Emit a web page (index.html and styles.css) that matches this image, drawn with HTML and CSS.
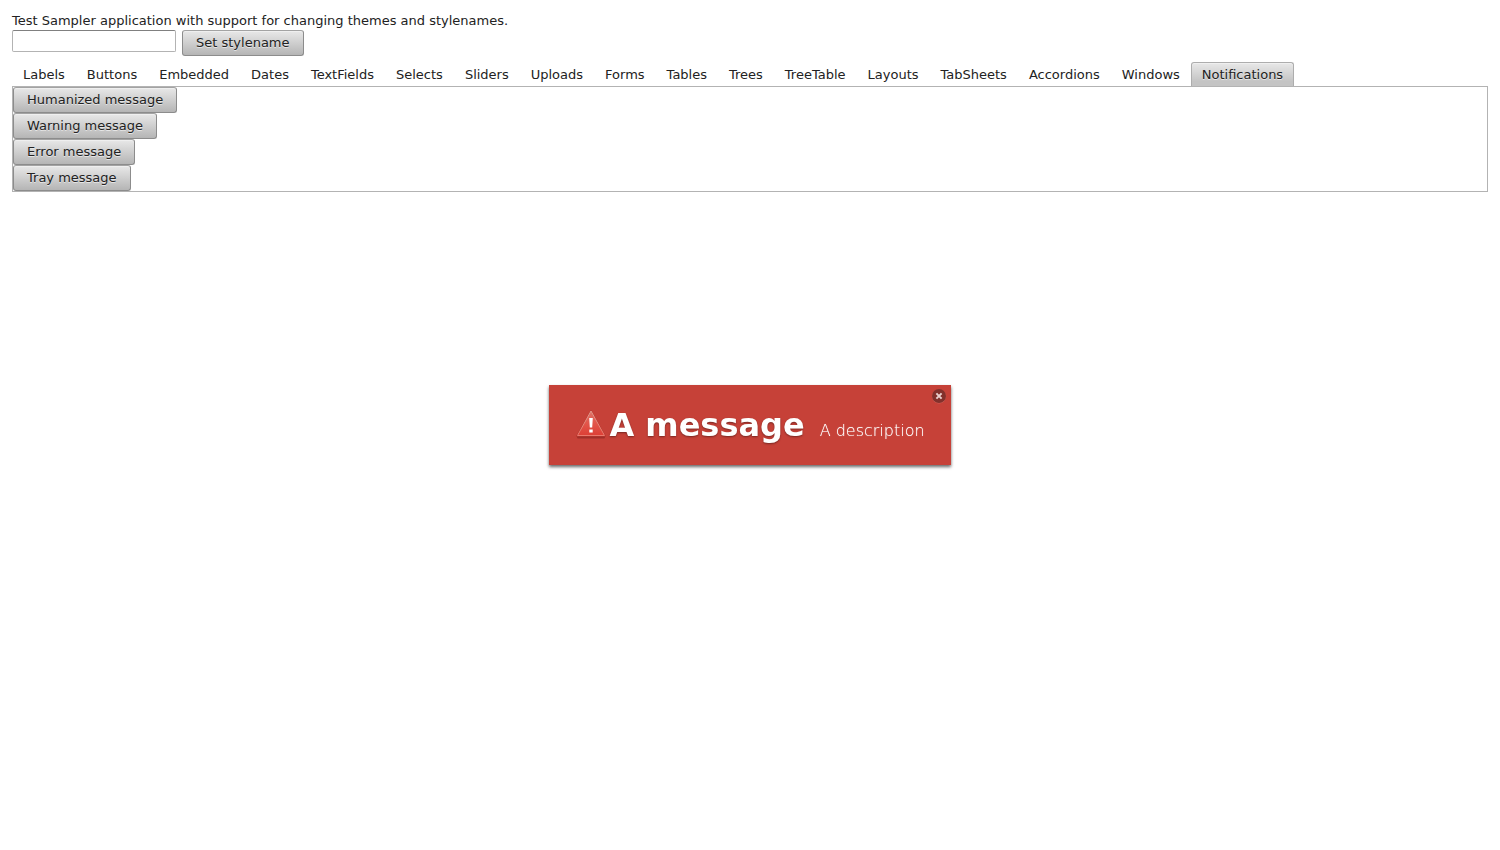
FILE: index.html
```html
<!DOCTYPE html>
<html lang="en">
<head>
<meta charset="utf-8">
<title>Test Sampler</title>
<link rel="stylesheet" href="styles.css">
</head>
<body>
<main class="app">
  <label class="intro" for="stylename">Test Sampler application with support for changing themes and stylenames.</label>
  <div class="toolbar">
    <input class="textfield" id="stylename" type="text">
    <button class="button" type="button">Set stylename</button>
  </div>
  <div class="tabs" role="tablist">
    <button class="tab" type="button" role="tab">Labels</button>
    <button class="tab" type="button" role="tab">Buttons</button>
    <button class="tab" type="button" role="tab">Embedded</button>
    <button class="tab" type="button" role="tab">Dates</button>
    <button class="tab" type="button" role="tab">TextFields</button>
    <button class="tab" type="button" role="tab">Selects</button>
    <button class="tab" type="button" role="tab">Sliders</button>
    <button class="tab" type="button" role="tab">Uploads</button>
    <button class="tab" type="button" role="tab">Forms</button>
    <button class="tab" type="button" role="tab">Tables</button>
    <button class="tab" type="button" role="tab">Trees</button>
    <button class="tab" type="button" role="tab">TreeTable</button>
    <button class="tab" type="button" role="tab">Layouts</button>
    <button class="tab" type="button" role="tab">TabSheets</button>
    <button class="tab" type="button" role="tab">Accordions</button>
    <button class="tab" type="button" role="tab">Windows</button>
    <button class="tab tab-selected" type="button" role="tab" aria-selected="true">Notifications</button>
  </div>
  <section class="panel" role="tabpanel">
    <button class="button" type="button">Humanized message</button>
    <button class="button" type="button">Warning message</button>
    <button class="button" type="button">Error message</button>
    <button class="button" type="button">Tray message</button>
  </section>
</main>
<div class="notification" role="alert">
  <svg class="warning-icon" viewBox="0 0 32 32" aria-hidden="true">
    <defs>
      <linearGradient id="fill" x1="0" y1="0" x2="0" y2="1">
        <stop offset="0" stop-color="#dd7468"/>
        <stop offset="0.5" stop-color="#e2564b"/>
        <stop offset="1" stop-color="#dc3f35"/>
      </linearGradient>
      <linearGradient id="edge" x1="0" y1="0" x2="0" y2="1">
        <stop offset="0" stop-color="#e39a8d"/>
        <stop offset="1" stop-color="#ea7a6d"/>
      </linearGradient>
    </defs>
    <path d="M3 28.500h26" stroke="#7c211c" stroke-width="2" stroke-linecap="round" opacity=".5"/>
    <path d="M16 1L31 27.500H1Z" fill="#ac3129"/>
    <path d="M16 2L29.500 26.500H2.500Z" fill="url(#fill)" stroke="url(#edge)"/>
    <path d="M14.200 9h3.600l-.6 9.500h-2.400zM14.300 20.500h3.400v3h-3.400z" fill="#fff"/>
  </svg>
  <h1 class="message">A message</h1>
  <p class="description">A description</p>
  <button class="close" type="button" aria-label="Close">
    <svg class="close-icon" viewBox="0 0 16 16" aria-hidden="true">
      <circle cx="8" cy="8.500" r="7" fill="#d2655c"/>
      <circle cx="8" cy="8" r="7" fill="#82302b"/>
      <path d="M5.400 5.400l5.200 5.200M10.600 5.400l-5.200 5.200" stroke="#e9cfcd" stroke-width="2"/>
    </svg>
  </button>
</div>
</body>
</html>
```
FILE: styles.css
```css
* {
  box-sizing: border-box;
}

body {
  margin: 0;
  background: #fff;
  color: #222;
  font: 13px/18px "DejaVu Sans", sans-serif;
}

.app {
  padding: 12px;
}

.intro {
  display: block;
}

.toolbar {
  display: flex;
  align-items: flex-start;
  gap: 6px;
  margin-bottom: 6px;
}

.textfield {
  width: 164px;
  height: 22px;
  padding: 2px;
  border: 1px solid #b3b3b3;
  border-top-color: #808080;
  border-radius: 2px;
  background: #fff;
  font: inherit;
}

.button {
  height: 26px;
  padding: 0 13px 1px;
  border: 1px solid #8c8c8c;
  border-top-color: #a3a3a3;
  border-radius: 3px;
  background: linear-gradient(#e8e8e8, #b5b5b5);
  box-shadow: inset 0 1px 0 #efefef;
  color: #222;
  font: inherit;
  text-shadow: 0 1px 0 #e6e6e6;
}

.tabs {
  display: flex;
}

.tab {
  height: 24px;
  padding: 0 10px;
  border: 1px solid transparent;
  border-bottom: 0;
  border-radius: 3px 3px 0 0;
  background: none;
  color: #222;
  font: inherit;
}

.tab-selected {
  border-color: #adadad;
  background: linear-gradient(#e8e8e8, #c4c4c4 80%);
  box-shadow: inset 0 1px 0 #efefef;
  text-shadow: 0 1px 0 #e6e6e6;
}

.panel {
  display: flex;
  flex-direction: column;
  align-items: flex-start;
  border: 1px solid #b3b3b3;
}

.notification {
  position: fixed;
  inset: 0;
  width: fit-content;
  height: fit-content;
  margin: auto;
  display: flex;
  align-items: baseline;
  padding: 20px 26px;
  background: #c64138;
  box-shadow: 0 2px 3px rgba(0, 0, 0, 0.6);
  color: #fff;
  white-space: nowrap;
}

.warning-icon {
  align-self: center;
  width: 32px;
  height: 32px;
  margin-right: 2px;
}

.message {
  margin: 0 15px 0 0;
  font-size: 32px;
  line-height: 40px;
  text-shadow: 0 1px 2px rgba(0, 0, 0, 0.4);
}

.description {
  margin: 0;
  font-size: 16px;
  font-weight: 200;
  text-shadow: 0 0 1px rgba(255, 255, 255, 0.5);
}

.close {
  position: absolute;
  top: 3px;
  right: 4px;
  width: 16px;
  height: 16px;
  padding: 0;
  border: 0;
  background: none;
}

.close-icon {
  display: block;
}
```
